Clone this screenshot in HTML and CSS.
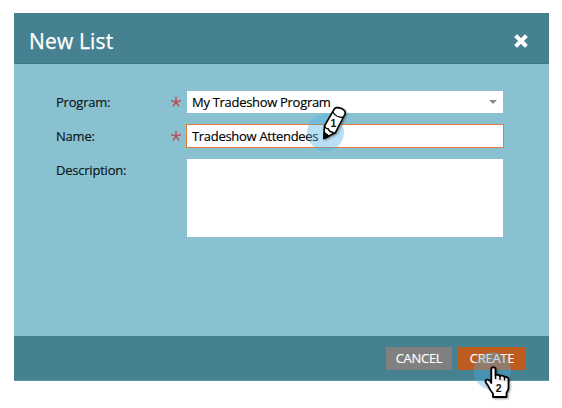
FILE: index.html
```html
<!DOCTYPE html>
<html lang="en">
<head>
<meta charset="utf-8">
<title>New List</title>
<link rel="stylesheet" href="styles.css">
</head>
<body>
<section class="dialog">
  <header class="header">
    <h1 class="title">New List</h1>
    <svg class="close" width="14" height="14" viewBox="0 0 14 14"><path d="M3 3l8 8M11 3l-8 8"/></svg>
  </header>
  <div class="form">
    <div class="row">
      <span class="label">Program:</span>
      <svg class="required" width="12" height="12" viewBox="0 0 12 12"><path d="M6 .8V6L1 4.6M6 6l5-1.4M6 6l-3 4.4M6 6l3 4.4"/></svg>
      <div class="field select"><span>My Tradeshow Program</span><i class="caret"></i></div>
    </div>
    <div class="row name-row">
      <span class="label">Name:</span>
      <svg class="required" width="12" height="12" viewBox="0 0 12 12"><path d="M6 .8V6L1 4.6M6 6l5-1.4M6 6l-3 4.4M6 6l3 4.4"/></svg>
      <div class="field focused"><span>Tradeshow Attendees</span></div>
    </div>
    <div class="row area-row">
      <span class="label">Description:</span>
      <div class="field area"></div>
    </div>
  </div>
  <footer class="footer">
    <div class="button cancel"><span>CANCEL</span></div>
    <div class="button create"><span>CREATE</span></div>
  </footer>
</section>
<svg class="marker pencil" width="50" height="54" viewBox="302 102 50 54">
  <circle cx="325.5" cy="132.5" r="18.5" fill="#4daee6" fill-opacity=".4"/>
  <g stroke="#000" stroke-linejoin="round" stroke-linecap="round">
    <path d="M323.800 138.500l.6-12.300 9.600-16.700c1.800-4.500 12.500-.3 11 4.500l-9.700 18.800z" fill="#fff" stroke-width="1.600"/>
    <path d="M323.800 138.500l.3-6.500 5.200 4z" fill="#000" stroke-width="1"/>
    <path d="M324.800 126.500c.8 2 2.200 2.300 3.700 2.500.5 2 2 3 3.500 3 .8 1 1.600 1.500 3 1M332.800 112c2 3.500 6 5.500 10.500 5.500" fill="none" stroke-width="1.300"/>
  </g>
  <text x="330.500" y="127" class="digit">1</text>
</svg>
<svg class="marker hand" width="46" height="52" viewBox="472 350 46 52">
  <circle cx="492.300" cy="371" r="18.800" fill="#4daee6" fill-opacity=".38"/>
  <path d="M491.300 369.500c0-3 4-3 4.200 0v6.200c.5-1.500 4.200-1.300 4.500.8.700-1.400 4.200-1 4.500 1 .9-1.200 4-.7 4 2v8.500c0 2-1.500 3.500-2 5v4h-13.500v-3.500c-2-2.300-3.500-4.500-4.500-7-.8-2-3-3.500-3-5 0-2.500 3.300-2.200 4.500-.6l1.300 2.100z" fill="#fff" stroke="#000" stroke-width="1.800" stroke-linejoin="round"/>
  <path d="M495.500 375v4M500 376.500v3.500M504.500 377.500v3" stroke="#000" stroke-width="1.300"/>
  <text x="495.800" y="392" class="digit">2</text>
</svg>
</body>
</html>
```
FILE: styles.css
```css
* { box-sizing: border-box; }
body { margin: 0; padding: 13px 13px 27px 14px; height: 408px; background: #fff; font: 13px/20px "Open Sans", sans-serif; letter-spacing: -.28px; color: #0b1517; overflow: hidden; }
.dialog { display: flex; flex-direction: column; height: 368px; background: #89c1d0; }
.header { display: flex; align-items: center; justify-content: space-between; height: 51px; padding: 5px 21px 0 15px; background: #468192; border-bottom: 1px solid #3e7788; }
.title { margin: 0; font-size: 21px; line-height: 30px; font-weight: 400; letter-spacing: .15px; color: #fff; -webkit-text-stroke: .25px #fff; }
.close path { fill: none; stroke: #fff; stroke-width: 4; stroke-linecap: square; }
.form { flex: 1; padding: 27px 45px 0 42px; }
.row { display: flex; align-items: center; height: 22px; }
.label { width: 114px; letter-spacing: -.22px; }
.label, .field { -webkit-text-stroke: .15px currentColor; }
.required { margin: 0 5px 0 0; }
.required path { fill: none; stroke: #b9535f; stroke-width: 1.6; }
.field { display: flex; align-items: center; justify-content: space-between; width: 316px; height: 22px; background: #fff; padding: 0 6px 0 5px; color: #000; letter-spacing: -.3px; }
.caret { border: 4px solid transparent; border-top-color: #8b8b8b; border-bottom: 0; }
.name-row { height: 24px; margin-top: 11px; }
.focused { width: 318px; height: 24px; margin-left: -1px; padding-bottom: 1px; border: 1px solid #e2783a; }
.area-row { height: 78px; margin-top: 11px; align-items: flex-start; }
.area-row .label { width: 131px; padding-top: 1px; }
.area { height: 78px; }
.footer { display: flex; height: 45px; justify-content: flex-end; gap: 6px; padding: 11px 23px 0 0; background: #468192; border-bottom: 1px solid #6299a8; }
.button { display: flex; align-items: center; justify-content: center; height: 23px; padding-bottom: 1px; color: #fff; font-size: 13px; -webkit-text-stroke: .15px #fff; }
.cancel { width: 66px; background: #808080; }
.create { width: 68px; background: #be5c20; }
.marker { position: absolute; letter-spacing: 0; }
.pencil { left: 302px; top: 102px; }
.hand { left: 472px; top: 350px; }
.marker g, .hand path { filter: drop-shadow(1px 1px 1px rgba(0,0,0,.4)); }
.digit { font: 700 10.5px "Liberation Sans", sans-serif; fill: #111; }
```
